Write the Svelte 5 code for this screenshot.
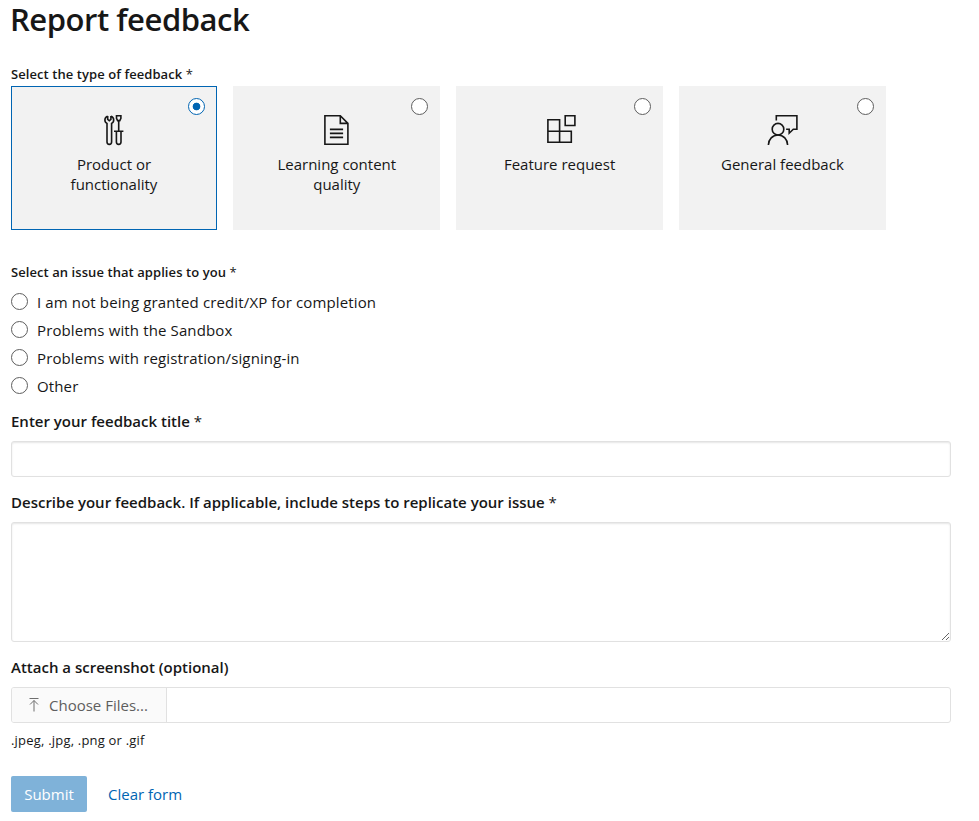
<script lang="ts">
  type FeedbackType = {
    id: string;
    label: string;
  };

  const feedbackTypes: Array<FeedbackType> = [
    { id: "product", label: "Product or functionality" },
    { id: "content", label: "Learning content quality" },
    { id: "feature", label: "Feature request" },
    { id: "general", label: "General feedback" },
  ];

  const issues: Array<string> = [
    "I am not being granted credit/XP for completion",
    "Problems with the Sandbox",
    "Problems with registration/signing-in",
    "Other",
  ];

  let selectedType = $state("product");
  let selectedIssue = $state("");
  let title = $state("");
  let description = $state("");

  const clearForm = () => {
    selectedType = "product";
    selectedIssue = "";
    title = "";
    description = "";
  };
</script>

<form class="feedback" onsubmit={(event) => event.preventDefault()}>
  <h1>Report feedback</h1>

  <div class="legend">Select the type of feedback <span class="star">*</span></div>
  <div class="cards">
    {#each feedbackTypes as type}
      <label class="card" class:selected={selectedType === type.id}>
        <input class="radio" type="radio" name="type" value={type.id} bind:group={selectedType} />
        <svg class="icon" width="32" height="32" viewBox="0 0 32 32">
          {#if type.id === "product"}
            <path d="M9.7 2.2a3.9 3.9 0 0 0-.7 7.2v18.7a2.3 2.3 0 0 0 4.6 0V9.4a3.9 3.9 0 0 0-.7-7.2M9.7 2v3.4l1.6 1.4 1.6-1.4V2" />
            <path d="M18.5 1.8h4.4v2.6l-1.1 2.2h-2.2l-1.1-2.2zM20.7 6.8v10.4M16 17.2h9.4M18.4 17.2v10.9a2.3 2.3 0 0 0 4.6 0V17.2" />
          {:else if type.id === "content"}
            <path d="M3.9 1.8h15.4l7.6 7.6v20.8h-23zM19.3 1.8v7.6h7.6" />
            <path d="M8.9 15.4h13.2M8.9 19.4h13.2M8.9 23.4h13.2" />
          {:else if type.id === "feature"}
            <path d="M3.9 5.8h11.7v22.4H3.9zM3.9 17.2h23.4v11H3.9" />
            <path d="M21.2 1.8h9.7v9.7h-9.7z" />
          {:else}
            <path d="M10.3 6.6V1.8h20.6v13.4h-3.6l-4.1 4v-4h-3.1" />
            <circle cx="12" cy="15.2" r="5.8" />
            <path d="M2.4 31a9.6 10 0 0 1 19.2 0" />
          {/if}
        </svg>
        <span class="card-label">{type.label}</span>
      </label>
    {/each}
  </div>

  <div class="legend issue-legend">Select an issue that applies to you <span class="star">*</span></div>
  <div class="issues">
    {#each issues as issue}
      <label class="issue">
        <input class="radio" type="radio" name="issue" value={issue} bind:group={selectedIssue} />
        <span>{issue}</span>
      </label>
    {/each}
  </div>

  <label class="field-label" for="title">Enter your feedback title <span class="star">*</span></label>
  <input id="title" class="text-input" type="text" bind:value={title} />

  <label class="field-label describe" for="description"
    >Describe your feedback. If applicable, include steps to replicate your issue <span class="star">*</span></label
  >
  <textarea id="description" class="text-input area" bind:value={description}></textarea>

  <div class="field-label attach">Attach a screenshot (optional)</div>
  <div class="file">
    <button type="button" class="choose">
      <svg width="12" height="16" viewBox="0 0 12 16">
        <path d="M1.5 1.5h9M6 14.5v-11M2 7.5l4-4 4 4" />
      </svg>
      <span>Choose Files...</span>
    </button>
  </div>
  <div class="help">.jpeg, .jpg, .png or .gif</div>

  <div class="actions">
    <button type="submit" class="submit"><span>Submit</span></button>
    <button type="button" class="clear" onclick={clearForm}>Clear form</button>
  </div>
</form>

<style>
  :global(body) {
    background: #fff;
  }

  .feedback {
    box-sizing: border-box;
    width: 979px;
    height: 821px;
    padding: 0 28px 0 11px;
    color: #171717;
    font-family: "Open Sans", "Noto Sans", sans-serif;
    font-size: 15px;
  }

  h1 {
    margin: 0 0 0 -1px;
    height: 64px;
    font-size: 31px;
    font-weight: 600;
    letter-spacing: -0.46px;
    line-height: 38px;
  }

  .legend {
    height: 22px;
    font-size: 13px;
    font-weight: 600;
    letter-spacing: 0.07px;
    line-height: 20px;
    white-space: nowrap;
  }

  .star {
    font-weight: 400;
  }

  .cards {
    display: grid;
    grid-template-columns: repeat(4, 1fr);
    gap: 16px;
    width: 875.2px;
    margin-left: -0.4px;
  }

  .card {
    position: relative;
    box-sizing: border-box;
    display: flex;
    flex-direction: column;
    align-items: center;
    height: 144px;
    padding-top: 27px;
    border: 1px solid #f2f2f2;
    background: #f2f2f2;
  }

  .card.selected {
    border-color: #0065b3;
  }

  .card .radio {
    position: absolute;
    top: 11px;
    right: 11px;
  }

  .icon {
    fill: none;
    stroke: #171717;
    stroke-width: 1.6;
  }

  .card-label {
    width: 130px;
    margin-top: 8px;
    line-height: 20px;
    text-align: center;
  }

  .radio {
    appearance: none;
    flex: none;
    box-sizing: border-box;
    width: 17px;
    height: 17px;
    margin: 0;
    border: 1px solid #5e5e5e;
    border-radius: 50%;
    background: #fff;
  }

  .radio:checked {
    border-color: #0065b3;
    background: radial-gradient(circle, #0065b3 3.5px, #fff 4.2px);
  }

  .issue-legend {
    margin-top: 32px;
    height: 26px;
  }

  .issue {
    display: flex;
    gap: 9px;
    height: 28px;
    letter-spacing: 0.13px;
    line-height: 28px;
  }

  .issue .radio {
    margin-top: 5px;
  }

  .field-label {
    display: block;
    height: 31px;
    margin-top: 10px;
    font-weight: 600;
    line-height: 22px;
    white-space: nowrap;
  }

  .describe,
  .attach {
    margin-top: 14px;
  }

  .text-input {
    display: block;
    box-sizing: border-box;
    width: 100%;
    height: 36px;
    margin: 0;
    padding: 6px 12px;
    border: 1px solid #e1e1e1;
    border-radius: 3px;
    background: #fff;
    box-shadow: inset 0 1px 2px rgba(0, 0, 0, 0.1);
    outline: none;
    font: inherit;
  }

  .area {
    height: 120px;
    resize: both;
  }

  .file {
    box-sizing: border-box;
    display: flex;
    height: 36px;
    border: 1px solid #e1e1e1;
    border-radius: 3px;
  }

  button {
    margin: 0;
    border: 0;
    font: inherit;
  }

  .choose {
    box-sizing: border-box;
    display: flex;
    align-items: center;
    gap: 9px;
    width: 155px;
    padding: 0 0 0 16px;
    border-right: 1px solid #e1e1e1;
    border-radius: 2px 0 0 2px;
    background: #fafafa;
    color: #5e5e5e;
    white-space: nowrap;
  }

  .choose svg {
    fill: none;
    stroke: #6e6e6e;
    stroke-width: 1;
  }

  .help {
    height: 46px;
    margin-top: 7px;
    font-size: 13px;
    letter-spacing: 0.2px;
    line-height: 20px;
  }

  .actions {
    display: flex;
    gap: 21px;
  }

  .submit {
    width: 76px;
    height: 36px;
    padding: 0;
    border-radius: 2px;
    background: #7fb2d9;
    color: #fff;
    font-weight: 500;
  }

  .clear {
    padding: 0;
    background: none;
    color: #0065b3;
  }
</style>
